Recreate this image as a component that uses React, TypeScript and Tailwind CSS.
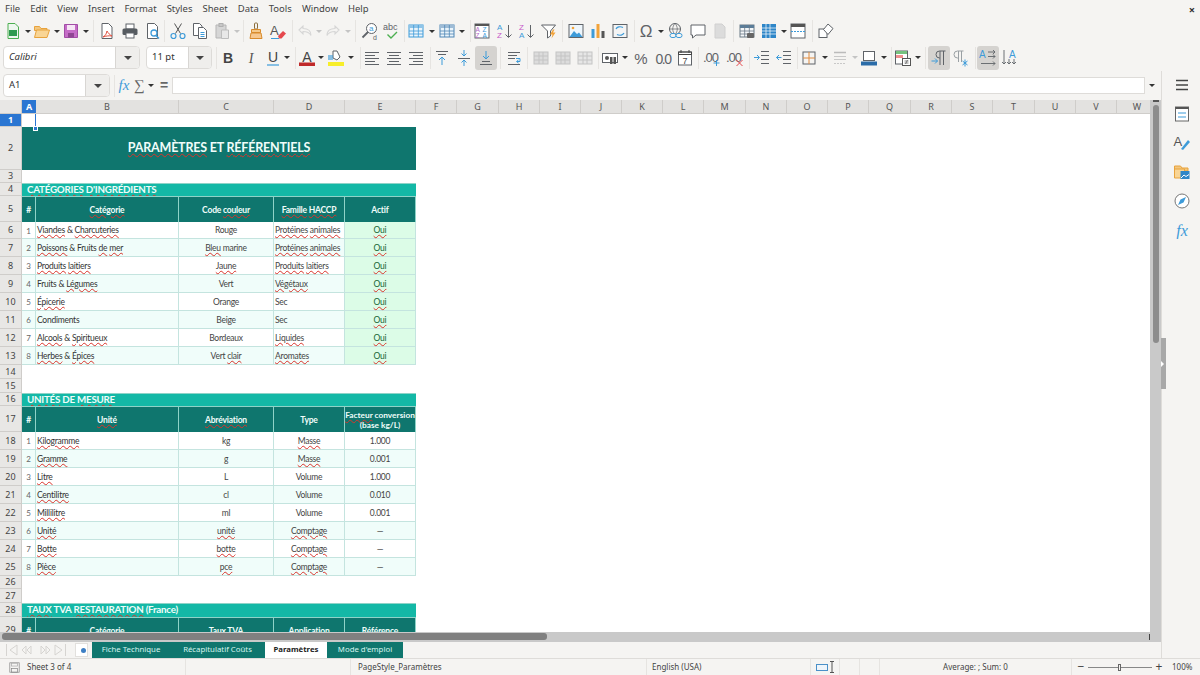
import type { ReactNode } from "react";

const GREY = "#5f6368";
const BLUE = "#3d9bd9";

function Ico({ children, size = 18 }: { children: ReactNode; size?: number }) {
  return (
    <svg width={size} height={size} viewBox="0 0 18 18" fill="none" strokeWidth="1">
      {children}
    </svg>
  );
}

function Btn({ children, c = "w-[22px]" }: { children?: ReactNode; c?: string }) {
  return <div className={`flex h-[24px] shrink-0 items-center justify-center rounded-[3px] ${c}`}>{children}</div>;
}

function Ar({ c = "w-[7px]", faint }: { c?: string; faint?: boolean }) {
  return (
    <div className={`flex h-[24px] shrink-0 items-center justify-center ${c}`}>
      <div className={`h-0 w-0 border-x-[3px] border-t-[3px] border-x-transparent ${faint ? "border-t-[#c4c4c4]" : "border-t-[#333]"}`} />
    </div>
  );
}

function Sep({ c }: { c: string }) {
  return <div className={`h-[22px] w-px shrink-0 bg-[#e6e4e1] ${c}`} />;
}

const Grid = ({ x = 2, y = 3, w = 14, h = 12, stroke = "#8a8a8a", head = "#8a8a8a", fill = "#fff" }: any) => (
  <>
    <rect x={x} y={y} width={w} height={h} fill={fill} stroke={stroke} />
    <rect x={x} y={y} width={w} height={3} fill={head} />
    <path d={`M${x} ${y + 6}h${w}M${x} ${y + 9}h${w}M${x + w / 3} ${y}v${h}M${x + (2 * w) / 3} ${y}v${h}`} stroke={stroke} strokeWidth=".8" />
  </>
);

function Toolbar1() {
  return (
    <div className="flex h-[26px] items-center pl-[2px]">
      <Btn><Ico><path d="M4 1.500h7l3.500 3.500v11.500H4z" fill="#eef7ef" stroke="#4caf50" /><rect x="5" y="8" width="8" height="6" fill="#2e9b4f" /></Ico></Btn>
      <Ar />
      <Btn><Ico><path d="M1.500 4.500h5l1.500 2h6v2H1.500z" fill="#f3c77f" stroke="#e8a33d" /><path d="M1.500 15.500l2-7.500h13l-2.500 7.500z" fill="#f9d595" stroke="#e8a33d" /></Ico></Btn>
      <Ar />
      <Btn><Ico><path d="M2.500 2.500h13v13h-13z" fill="#c56cc7" stroke="#a24da6" /><rect x="5" y="3" width="8" height="5" fill="#f6e6f6" /><rect x="6" y="11" width="6" height="4.500" fill="#8f4593" /></Ico></Btn>
      <Ar c="w-[8px]" />
      <Sep c="ml-[3px] mr-px" />
      <Btn c="w-[23px]"><Ico><path d="M4 1.500h6.500l3.500 3.500v11.500H4z" fill="#fff" stroke={GREY} /><path d="M9 9c-.5 3-2 5-4 6 3-1 6-1.500 9-1-2-1-4-3-5-5z" stroke="#e0503f" /></Ico></Btn>
      <Btn c="w-[23px]"><Ico><rect x="5" y="2" width="8" height="5" fill="#fff" stroke={GREY} /><rect x="1.500" y="6.500" width="15" height="6.500" rx="1.500" fill="#565b60" /><rect x="5" y="11" width="8" height="5" fill="#fff" stroke={GREY} /></Ico></Btn>
      <Btn c="w-[23px]"><Ico><path d="M3.500 1.500h7l3 3v12h-10z" fill="#fff" stroke={GREY} /><circle cx="10" cy="11" r="3" fill="#fff" stroke={BLUE} strokeWidth="1.300" /><path d="M12 13.500l3 3" stroke={BLUE} strokeWidth="1.500" /></Ico></Btn>
      <Sep c="" />
      <Btn c="ml-[2px] w-[22px]"><Ico><path d="M5.500 1.500l6 10M12.500 1.500l-6 10" stroke="#555" /><circle cx="4.500" cy="14" r="2.500" stroke={BLUE} strokeWidth="1.200" /><circle cx="13.500" cy="14" r="2.500" stroke={BLUE} strokeWidth="1.200" /></Ico></Btn>
      <Btn><Ico><path d="M2.500 1.500h6l2.500 2.500v9.500h-8.500z" fill="#fff" stroke={GREY} /><path d="M7.500 5.500h5l3 3v8h-8z" fill="#fff" stroke={GREY} /><path d="M9.500 10.500h4M9.500 12.500h4M9.500 14.500h4" stroke={BLUE} /></Ico></Btn>
      <Btn><Ico><path d="M3 3h10v13h-10z" fill="#d6d6d6" stroke="#b5b5b5" /><rect x="6" y="1.500" width="4" height="3" fill="#c8c8c8" stroke="#b0b0b0" /><path d="M8.500 8h7v8.500h-7z" fill="#e8e8e8" stroke="#bdbdbd" /></Ico></Btn>
      <Ar faint />
      <Sep c="ml-[3px]" />
      <Btn c="ml-px w-[22px]"><Ico><rect x="7.500" y="1" width="3" height="6" rx="1" stroke="#8a6d3b" /><path d="M4.500 7.500h9v3h-9z" fill="#f5c98a" stroke="#d88b2c" /><path d="M4 11h10l1 5.500h-12z" fill="#f7c88f" stroke="#d88b2c" /></Ico></Btn>
      <Btn><Ico><text x="1" y="13" fontSize="13" fontFamily="Liberation Sans" fill="#555">A</text><path d="M9 14l5-5 3 2.500-4.500 5h-2.500z" fill="#e5484d" /><path d="M2 16.500h8" stroke={BLUE} /></Ico></Btn>
      <Sep c="ml-[3px]" />
      <Btn c="ml-px w-[22px]"><Ico><path d="M3 8l4-4v2.500c4 0 8 1.500 8 7-1.500-3-4-4-8-4v2.500z" stroke="#d6d6d6" strokeWidth="1.100" /></Ico></Btn>
      <Ar faint c="w-[6px]" />
      <Btn><Ico><path d="M15 8l-4-4v2.500c-4 0-8 1.500-8 7 1.500-3 4-4 8-4v2.500z" stroke="#d6d6d6" strokeWidth="1.100" /></Ico></Btn>
      <Ar faint c="w-[8px]" />
      <Sep c="ml-[3px]" />
      <Btn c="ml-[3px] w-[22px]"><Ico><circle cx="10.500" cy="6.500" r="5" fill="#fff" stroke={GREY} /><path d="M7 10l-5.500 5.500" stroke={GREY} strokeWidth="1.800" /><text x="8" y="9" fontSize="8" fontFamily="Liberation Sans" fill={BLUE}>a</text><text x="12" y="17.500" fontSize="7" fontFamily="Liberation Sans" fill={GREY}>d</text></Ico></Btn>
      <Btn><Ico><text x="0" y="8" fontSize="9" fontFamily="Liberation Sans" fill={GREY}>abc</text><path d="M4.500 12.500l3.500 3.500 6-6" stroke="#4caf50" strokeWidth="1.400" /></Ico></Btn>
      <Sep c="ml-px" />
      <Btn><Ico><Grid stroke="#3d9bd9" head="#8fc4e8" fill="#eaf4fb" /></Ico></Btn>
      <Ar c="w-[9px]" />
      <Btn><Ico><Grid stroke="#4f86b5" head="#9dbbd6" fill="#eaf4fb" /></Ico></Btn>
      <Ar c="w-[8px]" />
      <Sep c="ml-[4px]" />
      <Btn><Ico><rect x="2" y="2" width="14" height="14" fill="#fff" stroke={GREY} /><rect x="2" y="2" width="14" height="2" fill="#555" /><text x="2.500" y="10" fontSize="6.500" fontFamily="Liberation Sans" fill="#b36ac9">A</text><text x="9.500" y="10" fontSize="6.500" fontFamily="Liberation Sans" fill={BLUE}>Z</text><text x="2.500" y="16" fontSize="6.500" fontFamily="Liberation Sans" fill="#b36ac9">Z</text><text x="9.500" y="16" fontSize="6.500" fontFamily="Liberation Sans" fill={BLUE}>A</text></Ico></Btn>
      <Btn c="ml-px w-[22px]"><Ico><text x="1" y="8" fontSize="8" fontFamily="Liberation Sans" fill={BLUE}>A</text><text x="1" y="16" fontSize="8" fontFamily="Liberation Sans" fill="#c659c9">Z</text><path d="M12.500 3v12M9.500 12.500l3 3 3-3" stroke={GREY} /></Ico></Btn>
      <Btn><Ico><text x="1" y="8" fontSize="8" fontFamily="Liberation Sans" fill="#c659c9">Z</text><text x="1" y="16" fontSize="8" fontFamily="Liberation Sans" fill={BLUE}>A</text><path d="M12.500 3v12M9.500 12.500l3 3 3-3" stroke={GREY} /></Ico></Btn>
      <Btn><Ico><path d="M1.500 3h14l-5 6v5l-3 2v-7z" fill="#fff" stroke={GREY} /><path d="M13 7.500l-3 5h2.500l-1 4 4-6h-2.500l1.500-3z" fill="#f2a33a" /></Ico></Btn>
      <Sep c="ml-[2px]" />
      <Btn c="ml-[2px] w-[22px]"><Ico><rect x="2" y="2.500" width="14" height="13" fill="#eef6fc" stroke={GREY} /><path d="M2.500 15l4.500-6 3 3 2-1.500 3.500 4.500z" fill={BLUE} /><circle cx="6" cy="6" r="1.300" fill="#f2a33a" /></Ico></Btn>
      <Btn><Ico><rect x="2.500" y="7" width="3" height="9" fill={BLUE} /><rect x="7.500" y="2" width="3" height="14" fill="#f2a33a" /><rect x="12.500" y="9" width="3" height="7" fill="#555" /></Ico></Btn>
      <Btn><Ico><rect x="2" y="2.500" width="14" height="13" fill="#f4f4f4" stroke={GREY} /><path d="M5 7c1-2 4-3 7-1.500M13 11c-1 2-4 3-7 1.500" stroke={BLUE} strokeWidth="1.200" /></Ico></Btn>
      <Sep c="ml-[3px]" />
      <Btn><Ico><text x="9" y="15" textAnchor="middle" fontSize="17" fontFamily="Liberation Sans" fill={GREY}>Ω</text></Ico></Btn>
      <Ar />
      <Btn c="ml-px w-[22px]"><Ico><circle cx="8" cy="7" r="5.500" stroke={GREY} /><path d="M2.500 7h11M8 1.500c-3 3-3 8 0 11M8 1.500c3 3 3 8 0 11" stroke={GREY} strokeWidth=".7" /><rect x="3" y="11.500" width="6" height="4" rx="2" stroke={BLUE} fill="#f5f4f2" /><rect x="9" y="11.500" width="6" height="4" rx="2" stroke={BLUE} fill="#f5f4f2" /></Ico></Btn>
      <Btn><Ico><path d="M2 3h14v10H7l-3.500 3v-3H2z" fill="#fff" stroke={GREY} /></Ico></Btn>
      <Btn><Ico><path d="M4 2h7l3 3v11H4z" fill="#dcdcdc" stroke="#d0d0d0" /></Ico></Btn>
      <Sep c="ml-[2px]" />
      <Btn c="ml-[2px] w-[22px]"><Ico><Grid stroke="#6b7a86" head="#5b7d99" fill="#f3f6f8" /><rect x="9" y="11" width="7" height="5" fill="#666" rx="1" /></Ico></Btn>
      <Btn><Ico><rect x="2" y="2" width="14" height="14" fill="#2e86c8" /><path d="M2 6h14M2 9h14M2 12h14M6 2v14M10 2v14" stroke="#fff" strokeWidth=".7" /></Ico></Btn>
      <Ar />
      <Btn><Ico><rect x="2" y="2" width="14" height="14" fill="#fff" stroke={GREY} /><rect x="2" y="2" width="14" height="3" fill="#555" /><path d="M2 9.500h14" stroke={BLUE} strokeDasharray="2 1" /></Ico></Btn>
      <Sep c="ml-[3px]" />
      <Btn c="ml-[2px] w-[22px]"><Ico><rect x="2" y="7" width="8" height="8.500" fill="#fff" stroke={GREY} /><path d="M11 2l5 4.500-5 6-4.500-5z" fill="#fff" stroke={GREY} /></Ico></Btn>
    </div>
  );
}

const Select = ({ text, c, btn, italic }: { text: string; c: string; btn: string; italic?: boolean }) => (
  <div className={`flex h-[23px] shrink-0 items-center overflow-hidden rounded-[4px] border border-[#dddbd8] bg-white ${c}`}>
    <span className={`flex-1 pl-[5px] text-[9.500px] text-[#333] ${italic ? "italic" : ""}`}>{text}</span>
    <div className={`flex h-full items-center justify-center border-l border-[#d8d6d3] bg-[#efeeec] ${btn}`}>
      <div className="h-0 w-0 border-x-[4px] border-t-[4px] border-x-transparent border-t-[#444]" />
    </div>
  </div>
);

const Letter = ({ t, y = 14 }: { t: string; y?: number }) => (
  <text x="9" y={y} textAnchor="middle" fontSize="14" fontFamily="Liberation Sans" fill="#444">{t}</text>
);

const Al = ({ d }: { d: string }) => (
  <Ico><path d={d} stroke={GREY} /></Ico>
);

function MergeI({ color = "#c4c4c4" }: { color?: string }) {
  return <Ico><rect x="2" y="3" width="14" height="12" fill="#dcdcdc" stroke={color} /><path d="M2 7h14M2 11h14M7 3v12M11 3v12" stroke={color} /></Ico>;
}

function Toolbar2() {
  return (
    <div className="flex h-[27px] items-center pl-[3px]">
      <Select text="Calibri" italic c="w-[137px]" btn="w-[24px]" />
      <Select text="11 pt" c="ml-[6px] w-[66px]" btn="w-[23px]" />
      <Sep c="ml-[4px]" />
      <Btn><Ico><text x="9" y="14" textAnchor="middle" fontSize="14" fontWeight="700" fontFamily="Liberation Sans" fill="#444">B</text></Ico></Btn>
      <Btn c="ml-px w-[22px]"><Ico><text x="9" y="14" textAnchor="middle" fontSize="14" fontStyle="italic" fontFamily="Liberation Serif" fill="#555">I</text></Ico></Btn>
      <Btn c="w-[21px]"><Ico><Letter t="U" y={13} /><path d="M3 16h12" stroke={BLUE} strokeWidth="1.200" /></Ico></Btn>
      <Ar c="w-[8px]" />
      <Sep c="ml-[4px]" />
      <Btn c="w-[21px]"><Ico><Letter t="A" y={12.500} /><rect x="1" y="13.500" width="16" height="3.500" fill="#c02a2a" /></Ico></Btn>
      <Ar c="w-[8px]" />
      <Btn><Ico><path d="M6 2h4l3 6-3 3-4-2z" fill="#fff" stroke={GREY} /><rect x="1" y="6" width="5" height="5" fill={BLUE} opacity=".6" /><rect x="1" y="13" width="16" height="4" fill="#f7ee2a" /></Ico></Btn>
      <Ar c="w-[8px]" />
      <Sep c="ml-[5px]" />
      <Btn><Al d="M2 3.500h14M2 6.500h10M2 9.500h14M2 12.500h10M2 15.500h14" /></Btn>
      <Btn><Al d="M2 3.500h14M4 6.500h10M2 9.500h14M4 12.500h10M2 15.500h14" /></Btn>
      <Btn><Al d="M2 3.500h14M6 6.500h10M2 9.500h14M6 12.500h10M2 15.500h14" /></Btn>
      <Sep c="ml-[3px]" />
      <Btn><Ico><path d="M3 2.500h12M5 5.500h8" stroke={GREY} /><path d="M9 16V8M6 11l3-3 3 3" stroke={BLUE} /></Ico></Btn>
      <Btn><Ico><path d="M3 9.500h12" stroke={GREY} /><path d="M9 1v6M6.500 4.500l2.500 2.500 2.500-2.500M9 17v-6M6.500 13.500l2.500-2.500 2.500 2.500" stroke={BLUE} /></Ico></Btn>
      <Btn c="w-[22px] bg-[#d5d3d0]"><Ico><path d="M3 15.500h12M5 12.500h8" stroke={GREY} /><path d="M9 2v8M6 7l3 3 3-3" stroke={BLUE} /></Ico></Btn>
      <Sep c="ml-[3px]" />
      <Btn c="ml-[2px] w-[22px]"><Ico><path d="M3 3.500h12M3 6.500h9M3 9.500h7M3 15.500h12" stroke={GREY} /><path d="M11 9.500h4v3h-3M13.500 11l-2 1.500 2 1.500" stroke={BLUE} /></Ico></Btn>
      <Sep c="ml-[2px]" />
      <Btn c="ml-[2px] w-[22px]"><MergeI /></Btn>
      <Btn><MergeI /></Btn>
      <Btn><Ico><rect x="2" y="3" width="14" height="12" fill="#e6e6e6" stroke="#c4c4c4" /><path d="M2 7h14M2 11h14M7 3v12M11 3v12" stroke="#c4c4c4" /></Ico></Btn>
      <Sep c="ml-[2px]" />
      <Btn><Ico><rect x="1.500" y="4.500" width="15" height="9" fill="#fff" stroke={GREY} /><circle cx="6" cy="9" r="2" fill="#555" /><rect x="9" y="8" width="2.500" height="7" fill="#555" /><rect x="12.500" y="8" width="2.500" height="7" fill="#555" /></Ico></Btn>
      <Ar c="w-[8px]" />
      <Btn c="ml-px w-[22px]"><Ico><text x="9" y="15" textAnchor="middle" fontSize="15" fontFamily="Liberation Sans" fill={GREY}>%</text></Ico></Btn>
      <Btn><Ico><text x="9" y="14.500" textAnchor="middle" fontSize="14" letterSpacing="-1.500" fontFamily="Liberation Sans" fill={GREY}>0.0</text></Ico></Btn>
      <Btn><Ico><rect x="2.500" y="3" width="13" height="13" fill="#fff" stroke={GREY} /><path d="M2.500 3h13v2.500h-13zM5 1v3M13 1v3" stroke="#444" /><text x="9" y="14.500" textAnchor="middle" fontSize="9" fontFamily="Liberation Sans" fill="#444">7</text></Ico></Btn>
      <Sep c="ml-[2px]" />
      <Btn c="ml-[2px] w-[22px]"><Ico><text x="0" y="13" fontSize="13" letterSpacing="-1" fontFamily="Liberation Sans" fill={GREY}>.00</text><path d="M13.500 11v6M10.500 14h6" stroke={BLUE} /></Ico></Btn>
      <Btn c="ml-px w-[22px]"><Ico><text x="0" y="13" fontSize="13" letterSpacing="-1" fontFamily="Liberation Sans" fill={GREY}>.00</text><path d="M10.500 11l6 6M16.500 11l-6 6" stroke="#e5484d" /></Ico></Btn>
      <Sep c="ml-[3px]" />
      <Btn c="ml-px w-[22px]"><Ico><path d="M8 2.500h8M8 6.500h8M8 10.500h8M8 14.500h8" stroke={GREY} /><path d="M1 8.500h5M4 6l2.500 2.500L4 11" stroke={BLUE} /></Ico></Btn>
      <Btn><Ico><path d="M8 2.500h8M8 6.500h8M8 10.500h8M8 14.500h8" stroke={GREY} /><path d="M6.500 8.500h-5M4 6L1.500 8.500 4 11" stroke={BLUE} /></Ico></Btn>
      <Sep c="ml-[2px]" />
      <Btn><Ico><rect x="3" y="3" width="12" height="12" stroke={GREY} /><path d="M9 3v12M3 9h12" stroke="#e08a3c" /></Ico></Btn>
      <Ar c="w-[9px]" />
      <Btn><Ico><path d="M3 3.500h12" stroke="#bbb" strokeWidth="1.500" /><path d="M3 7.500h12M3 10.500h12" stroke="#c8c8c8" /><path d="M3 14.500h12" stroke="#c8c8c8" strokeDasharray="2 1" /></Ico></Btn>
      <Ar faint />
      <Btn><Ico><rect x="3.500" y="2.500" width="11" height="9" fill="#fff" stroke={GREY} /><path d="M1 12.500h16v4h-16z" fill="#2b6ca8" /></Ico></Btn>
      <Ar />
      <Sep c="ml-[4px]" />
      <Btn><Ico><rect x="1.500" y="2" width="12" height="13" fill="#fff" stroke={GREY} /><rect x="2" y="2" width="11" height="3" fill="#77c17f" /><rect x="2" y="6" width="7" height="3" fill="#ef8f8f" /><rect x="8.500" y="9.500" width="8" height="7" fill="#fff" stroke="#555" /><path d="M10.500 12h4M10.500 14h4M13.500 11l-2 4" stroke="#555" strokeWidth=".7" /></Ico></Btn>
      <Ar c="w-[8px]" />
      <Sep c="ml-[3px]" />
      <Btn c="ml-[2px] w-[22px] bg-[#d5d3d0]"><Ico><path d="M10 16V2M13.500 16V2M15.500 2H9.500a3 3 0 000 7H10" stroke={GREY} /><path d="M1.500 12h6M5 9.500L7.500 12 5 14.500" stroke={BLUE} /></Ico></Btn>
      <Btn><Ico><path d="M6.500 13V2M9.500 13V2M11.500 2H5.500a3 3 0 000 7H6" stroke="#9aa0a4" /><path d="M10.500 12l5 4M15.500 12l-5 4M13 10.500v7" stroke={BLUE} /></Ico></Btn>
      <Sep c="ml-[3px]" />
      <Btn c="ml-px w-[22px] bg-[#d5d3d0]"><Ico><text x="0" y="9" fontSize="10" fontFamily="Liberation Sans" fill={BLUE}>A</text><path d="M9 3h7M14 1l2 2-2 2M9 7.500h7M14 5.500l2 2-2 2M2 14.500h14M14 12.500l2 2-2 2" stroke={GREY} strokeWidth=".9" /></Ico></Btn>
      <Btn><Ico><text x="8" y="9" fontSize="10" fontFamily="Liberation Sans" fill={BLUE}>A</text><path d="M3 1v14M1 13l2 2 2-2M8 10v5M6 13l2 2 2-2M13 10v5M11 13l2 2 2-2" stroke={GREY} strokeWidth=".9" /></Ico></Btn>
    </div>
  );
}

function FormulaBar() {
  return (
    <div className="flex h-[29px] items-center pl-[3px] pr-[3px]">
      <Select text="A1" c="w-[107px]" btn="w-[24px]" />
      <Sep c="ml-[4px]" />
      <span className="ml-[2px] w-[14px] text-center font-['Liberation_Serif',serif] text-[15px] italic text-[#3d9bd9]">fx</span>
      <span className="ml-[1px] w-[14px] text-center font-['Liberation_Serif',serif] text-[15px] text-[#666]">∑</span>
      <Ar c="ml-[1px] w-[8px]" />
      <span className="ml-[3px] w-[12px] text-center font-['Liberation_Sans',sans-serif] text-[14px] font-bold text-[#666]">=</span>
      <div className="ml-[2px] h-[17px] flex-1 border border-[#dedcd9] bg-white" />
      <Ar c="ml-[1px] w-[12px]" />
    </div>
  );
}

function Wavy({ text }: { text: string }) {
  // words between braces get the spell-check squiggle
  const parts = text.split(/(\{[^}]*\})/);
  return (
    <>
      {parts.map((p, i) =>
        p.startsWith("{") ? (
          <span key={i} className="underline decoration-[#d9342b] decoration-wavy decoration-[0.6px] underline-offset-[0.5px]">
            {p.slice(1, -1)}
          </span>
        ) : (
          <span key={i}>{p}</span>
        ),
      )}
    </>
  );
}

function Row({ n, h, active, children }: { n: number; h: string; active?: boolean; children?: ReactNode }) {
  return (
    <div className={`flex shrink-0 ${h}`}>
      <div
        className={`flex w-[22px] shrink-0 items-center justify-center border-b border-r border-[#cfcdca] font-['Noto_Sans',sans-serif] text-[9px] ${
          active ? "bg-[#2a76d2] font-bold text-white" : "bg-[#e8e7e5] text-[#444]"
        }`}
      >
        {n}
      </div>
      {children}
    </div>
  );
}

const W_NUM = "w-[14px]";
const W_B = "w-[143px]";
const W_C = "w-[95px]";
const W_D = "w-[71px]";
const W_E = "w-[71px]";

function Head({ cells, two }: { cells: string[]; two?: boolean }) {
  const widths = [W_NUM, W_B, W_C, W_D, W_E];
  return (
    <>
      {cells.map((t, i) => (
        <div
          key={i}
          className={`flex shrink-0 items-center justify-center border-r border-t border-[#8fd3c8] bg-[#0f766e] text-center font-bold leading-[10px] text-[#f0fdfa] ${widths[i]} ${
            two && i === 4 ? "text-[8.300px]" : "text-[8.500px] tracking-[-0.2px]"
          }`}
        >
          <span className="whitespace-pre-line">
            <Wavy text={t} />
          </span>
        </div>
      ))}
    </>
  );
}

function Body({ cells, i, active }: { cells: string[]; i: number; active?: boolean }) {
  const bg = i % 2 === 0 ? "bg-white" : "bg-[#f0fdfa]";
  const line = "border-b border-r border-[#c4e4df] pt-px";
  const text = "text-[8.500px] tracking-[-0.25px]";
  return (
    <>
      <div className={`flex shrink-0 items-center justify-center text-[8px] text-[#666] ${W_NUM} ${bg} ${line}`}>{i + 1}</div>
      <div className={`flex shrink-0 items-center pl-px text-[#333] ${text} ${W_B} ${bg} ${line}`}><span><Wavy text={cells[0]} /></span></div>
      <div className={`flex shrink-0 items-center justify-center text-[#444] ${text} ${W_C} ${bg} ${line}`}><span><Wavy text={cells[1]} /></span></div>
      <div className={`flex shrink-0 items-center whitespace-nowrap text-[#444] ${text} ${active ? "pl-px" : "justify-center"} ${W_D} ${bg} ${line}`}><span><Wavy text={cells[2]} /></span></div>
      <div className={`flex shrink-0 items-center justify-center ${text} ${W_E} ${line} ${active ? "bg-[#dcfce7] text-[#166534]" : `${bg} text-[#444]`}`}><span><Wavy text={cells[3]} /></span></div>
    </>
  );
}

const CATS = [
  ["{Viandes} & {Charcuteries}", "Rouge", "{Protéines} {animales}", "{Oui}"],
  ["{Poissons} & Fruits {de} {mer}", "{Bleu} marine", "{Protéines} {animales}", "{Oui}"],
  ["{Produits} {laitiers}", "{Jaune}", "{Produits} {laitiers}", "{Oui}"],
  ["Fruits & {Légumes}", "Vert", "{Végétaux}", "{Oui}"],
  ["{Épicerie}", "Orange", "Sec", "{Oui}"],
  ["Condiments", "Beige", "Sec", "{Oui}"],
  ["{Alcools} & {Spiritueux}", "Bordeaux", "{Liquides}", "{Oui}"],
  ["{Herbes} & {Épices}", "Vert {clair}", "{Aromates}", "{Oui}"],
];

const UNITS = [
  ["{Kilogramme}", "kg", "{Masse}", "1.000"],
  ["{Gramme}", "g", "{Masse}", "0.001"],
  ["{Litre}", "L", "Volume", "1.000"],
  ["{Centilitre}", "cl", "Volume", "0.010"],
  ["{Millilitre}", "ml", "Volume", "0.001"],
  ["{Unité}", "{unité}", "{Comptage}", "—"],
  ["{Botte}", "{botte}", "{Comptage}", "—"],
  ["{Pièce}", "{pce}", "{Comptage}", "—"],
];

const COLS: [string, string][] = [
  ["B", "w-[143px]"], ["C", "w-[95px]"], ["D", "w-[71px]"], ["E", "w-[71px]"],
  ["F", "w-[41px]"], ["G", "w-[42px]"], ["H", "w-[41px]"], ["I", "w-[41px]"], ["J", "w-[41px]"], ["K", "w-[41px]"],
  ["L", "w-[41px]"], ["M", "w-[42px]"], ["N", "w-[41px]"], ["O", "w-[41px]"], ["P", "w-[41px]"], ["Q", "w-[42px]"],
  ["R", "w-[41px]"], ["S", "w-[41px]"], ["T", "w-[42px]"], ["U", "w-[41px]"], ["V", "w-[41px]"], ["W", "w-[41px]"],
];

function Section({ text }: { text: string }) {
  return (
    <div className="flex w-[394px] items-center border-t border-[#8fd3c8] bg-[#14b8a6] pb-[2px] pl-[5px] text-[9.800px] font-bold tracking-[-0.25px] text-[#f0fdfa]">
      <span><Wavy text={text} /></span>
    </div>
  );
}

function Sheet() {
  return (
    <div className="relative min-w-0 flex-1 overflow-hidden bg-white font-['Lato',sans-serif]">
      <div className="flex h-[14px] border-b border-[#cfcdca] bg-[#e3e2e0] font-['Noto_Sans',sans-serif] text-[9px] text-[#555]">
        <div className="w-[22px] shrink-0 border-r border-[#cfcdca] bg-[#e8e7e5]" />
        <div className="flex w-[14px] shrink-0 items-center justify-center bg-[#2a76d2] font-bold text-white">A</div>
        {COLS.map(([l, w]) => (
          <div key={l} className={`flex shrink-0 items-center justify-center border-r border-[#cfcdca] ${w}`}>{l}</div>
        ))}
      </div>

      <Row n={1} h="h-[13px]" active>
        <div className="h-[14px] w-[14px] border-b border-r border-[#2a76d2]" />
      </Row>
      <Row n={2} h="h-[43px]">
        <div className="flex w-[394px] items-center justify-center bg-[#0f766e] text-[12.500px] font-bold tracking-[-0.2px] text-[#f0fdfa]">
          <span><Wavy text="{PARAMÈTRES} ET {RÉFÉRENTIELS}" /></span>
        </div>
      </Row>
      <Row n={3} h="h-[13px]" />
      <Row n={4} h="h-[13px]"><Section text="{CATÉGORIES} {D'INGRÉDIENTS}" /></Row>
      <Row n={5} h="h-[26px]"><Head cells={["#", "{Catégorie}", "Code {couleur}", "{Famille} {HACCP}", "Actif"]} /></Row>
      {CATS.map((c, i) => (
        <Row key={i} n={6 + i} h={i === 0 ? "h-[17px]" : "h-[18px]"}><Body cells={c} i={i} active /></Row>
      ))}
      <Row n={14} h="h-[14px]" />
      <Row n={15} h="h-[14px]" />
      <Row n={16} h="h-[13px]"><Section text="{UNITÉS} DE {MESURE}" /></Row>
      <Row n={17} h="h-[26px]"><Head two cells={["#", "{Unité}", "{Abréviation}", "Type", "{Facteur} conversion\n(base kg/L)"]} /></Row>
      {UNITS.map((c, i) => (
        <Row key={i} n={18 + i} h="h-[18px]"><Body cells={c} i={i} /></Row>
      ))}
      <Row n={26} h="h-[13px]" />
      <Row n={27} h="h-[14px]" />
      <Row n={28} h="h-[14px]"><Section text="{TAUX} TVA {RESTAURATION} (France)" /></Row>
      <Row n={29} h="h-[26px]"><Head cells={["#", "{Catégorie}", "Taux TVA", "Application", "{Référence}"]} /></Row>

      <div className="absolute left-[33px] top-[26px] h-[5px] w-[5px] border border-white bg-[#2a76d2]" />
    </div>
  );
}

function Tabs() {
  const tri = "#d6d4d1";
  return (
    <div className="flex h-[16px] items-stretch font-['Noto_Sans',sans-serif] text-[7.800px]">
      <div className="flex w-[75px] items-center pl-[5px]">
        <svg width="62" height="14" viewBox="0 0 62 14" fill="none" stroke={tri}>
          <path d="M1.500 1v12M12 2l-7 5 7 5z" />
          <path d="M21 3l-4 4 4 4zM26 3l-4 4 4 4z" />
          <path d="M36 3l4 4-4 4zM41 3l4 4-4 4z" />
          <path d="M50 2l7 5-7 5zM60.500 1v12" />
        </svg>
      </div>
      <div className="flex w-[17px] items-center">
        <div className="flex h-[14px] w-[13px] items-center justify-end border border-[#e2e0dd] bg-white pr-[1px]">
          <div className="h-[5px] w-[5px] rounded-full bg-[#3d7fc4]" />
        </div>
      </div>
      <div className="flex w-[78px] items-center justify-center bg-[#0f766e] text-[#d6f5ef]">Fiche Technique</div>
      <div className="flex w-[95px] items-center justify-center bg-[#0f766e] text-[#d6f5ef]">Récapitulatif Coûts</div>
      <div className="flex w-[62px] items-center justify-center bg-white font-bold text-[#222]">Paramètres</div>
      <div className="flex w-[76px] items-center justify-center bg-[#0f766e] text-[#d6f5ef]">Mode d'emploi</div>
    </div>
  );
}

function StatusBar() {
  const cell = "flex h-full items-center border-r border-[#e6e4e1]";
  return (
    <div className="flex h-[17px] items-center border-t border-[#dedcd9] bg-[#f5f4f2] font-['Noto_Sans',sans-serif] text-[8px] text-[#444]">
      <div className="flex w-[27px] justify-center pl-[2px]">
        <Ico size={13}><rect x="2.500" y="2.500" width="13" height="13" stroke="#888" /><rect x="5" y="3" width="8" height="4" stroke="#aaa" /><rect x="5" y="10.500" width="8" height="5" stroke="#888" /></Ico>
      </div>
      <span className={`w-[159px] ${cell}`}>Sheet 3 of 4</span>
      <span className={`w-[165px] ${cell}`} />
      <span className={`w-[296px] pl-[7px] ${cell}`}>PageStyle_Paramètres</span>
      <span className={`w-[164px] pl-[5px] ${cell}`}>English (USA)</span>
      <div className={`w-[29px] pl-[5px] ${cell}`}>
        <div className="h-[7px] w-[12px] border border-[#4a90c8] bg-[#eef5fb]" />
        <svg width="8" height="14" viewBox="0 0 8 14" fill="none"><path d="M2 1.500h4M2 12.500h4M4 1.500v11" stroke="#555" /></svg>
      </div>
      <span className={`w-[20px] ${cell}`} />
      <span className={`w-[20px] ${cell}`} />
      <span className={`w-[192px] justify-center whitespace-nowrap ${cell}`}>Average: ; Sum: 0</span>
      <span className="ml-[5px] w-[8px] text-center text-[12px] leading-none">−</span>
      <div className="relative mx-[3px] h-px w-[64px] bg-[#888]">
        <div className="absolute left-[30px] top-[-3px] h-[7px] w-[3px] border border-[#666] bg-[#f5f4f2]" />
      </div>
      <span className="w-[8px] text-center text-[12px] leading-none">+</span>
      <span className="ml-[9px]">100%</span>
    </div>
  );
}

function Deck() {
  return (
    <div className="relative flex w-[39px] shrink-0 flex-col items-center gap-[11px] border-l border-[#dedcd9] pl-[2px] pt-[5px]">
      <Ico><path d="M3 4.500h12M3 9h12M3 13.500h12" stroke="#444" strokeWidth="1.500" /></Ico>
      <Ico><rect x="2.500" y="2" width="13" height="14" fill="#fff" stroke="#666" /><rect x="2.500" y="2" width="13" height="2" fill="#555" /><path d="M5 8h8M5 12h8" stroke={BLUE} /></Ico>
      <Ico><text x="0.500" y="12" fontSize="13" fontFamily="Liberation Sans" fill="#555">A</text><path d="M8 15l7-9 2 2-7 8z" fill={BLUE} /></Ico>
      <Ico><path d="M1.500 3h6l1.500 2h6v3H1.500z" fill="#f3c77f" stroke="#e8a33d" /><path d="M1.500 6h10v9h-10z" fill="#f9d595" stroke="#e8a33d" /><rect x="7.500" y="8" width="9" height="8" fill="#2e86c8" /><path d="M8 15l3-3 2 1.500 3-2" stroke="#fff" /></Ico>
      <Ico><circle cx="9" cy="9" r="7" fill="#fff" stroke="#777" /><path d="M13 5l-2.500 5.500-5.500 2.500 2.500-5.500z" fill={BLUE} /></Ico>
      <Ico><text x="9" y="15" textAnchor="middle" fontSize="16" fontStyle="italic" fontFamily="Liberation Serif" fill={BLUE}>fx</text></Ico>
      <div className="absolute left-[-1px] top-[267px] flex h-[51px] w-[5px] items-center bg-[#a8a8a8]">
        <div className="h-0 w-0 border-y-[3px] border-l-[3px] border-y-transparent border-l-white" />
      </div>
    </div>
  );
}

export default function App() {
  return (
    <div className="flex h-[675px] w-[1200px] flex-col overflow-hidden bg-[#f5f4f2] font-['Noto_Sans',sans-serif] text-[#444]">
      <div className="flex h-[18px] shrink-0 items-center pl-[5px] text-[9.500px]">
        {["File", "Edit", "View", "Insert", "Format", "Styles", "Sheet", "Data", "Tools", "Window", "Help"].map((m) => (
          <span key={m} className="mr-[10px]">{m}</span>
        ))}
        <span className="ml-auto mr-[5px] text-[11px] font-bold leading-none text-[#333]">×</span>
      </div>
      <Toolbar1 />
      <Toolbar2 />
      <div className="flex min-h-0 flex-1">
        <div className="flex min-w-0 flex-1 flex-col">
          <FormulaBar />
          <div className="flex min-h-0 flex-1">
            <Sheet />
            <div className="w-[11px] shrink-0 bg-[#c9c9c9] pl-[3px]">
              <div className="h-[2px] w-[6px] bg-[#555]" />
              <div className="mt-[3px] h-[238px] w-[6px] rounded-[3px] bg-[#8c8c8c]" />
            </div>
          </div>
          <div className="flex h-[10px] shrink-0 justify-between bg-[#c9c9c9] pl-[2px] pr-[11px] pt-px">
            <div className="h-[7px] w-[545px] rounded-[3px] bg-[#808080]" />
            <div className="mt-px h-[6px] w-px bg-[#444]" />
          </div>
          <Tabs />
        </div>
        <Deck />
      </div>
      <StatusBar />
    </div>
  );
}
